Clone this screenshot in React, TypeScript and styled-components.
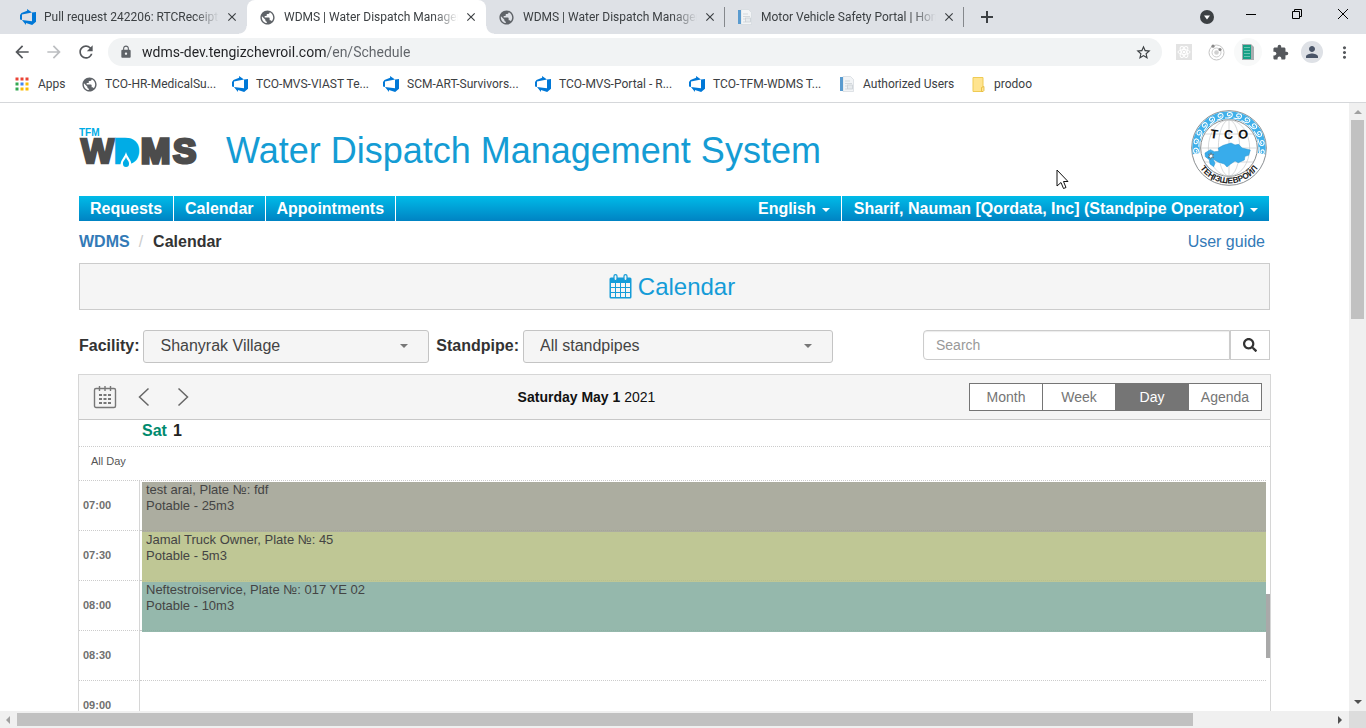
import React from "react";
import styled, { createGlobalStyle, css } from "styled-components";
import {
  MdArrowBack,
  MdArrowForward,
  MdClose,
  MdExtension,
  MdLock,
  MdMoreVert,
  MdPerson,
  MdPublic,
  MdRefresh,
  MdStarBorder,
} from "react-icons/md";
import { FaSearch } from "react-icons/fa";

const uiFont = 'Roboto, "Open Sans", sans-serif';
const pageFont = '"Liberation Sans", Arial, sans-serif';

const GlobalStyle = createGlobalStyle`
  *, *::before, *::after { box-sizing: border-box; }
  body { margin: 0; background: #fff; font-family: ${pageFont}; }
  button, input, select { font-family: inherit; margin: 0; }
  svg { display: block; flex: none; }
`;

/* ---------- browser frame ---------- */

const Browser = styled.div`
  display: flex;
  flex-direction: column;
  height: 100vh;
  overflow: hidden;
`;

const Chrome = styled.header`
  flex: none;
  font-family: ${uiFont};
  font-size: 12px;
  color: #3c4043;
  border-bottom: 1px solid #d5d7da;
`;

const TabStrip = styled.div`
  display: flex;
  height: 34px;
  padding-left: 8px;
  background: #dee1e6;
`;

const Tab = styled.div<{ $active?: boolean; $divider?: boolean }>`
  position: relative;
  display: flex;
  align-items: center;
  width: 239px;
  padding: 0 10px 0 12px;
  ${(p) =>
    p.$divider &&
    css`
      background: linear-gradient(#85888c, #85888c) right center / 1px 20px no-repeat;
    `}
  ${(p) =>
    p.$active &&
    css`
      background: #fff;
      border-radius: 8px 8px 0 0;

      &::before,
      &::after {
        content: "";
        position: absolute;
        bottom: 0;
        width: 8px;
        height: 8px;
      }

      &::before {
        right: 100%;
        background: radial-gradient(circle at 0 0, transparent 7px, #fff 8px);
      }

      &::after {
        left: 100%;
        background: radial-gradient(circle at 100% 0, transparent 7px, #fff 8px);
      }
    `}
`;

const TabLabel = styled.span`
  flex: 1;
  min-width: 0;
  margin: 0 8px;
  overflow: hidden;
  white-space: nowrap;
  line-height: 18px;
  mask-image: linear-gradient(90deg, #000 86%, transparent);
`;

const BareButton = styled.button`
  display: flex;
  align-items: center;
  justify-content: center;
  padding: 0;
  border: 0;
  background: none;
  color: #3c4043;
`;

const TabClose = styled(BareButton)`
  width: 10px;
  overflow: visible;
`;

const NewTab = styled(BareButton)`
  width: 46px;
`;

const WindowControls = styled.div`
  display: flex;
  margin-left: auto;
  height: 28px;
  color: #000;
`;

const WindowButton = styled(BareButton)`
  width: 46px;
  color: #000;
`;

const SearchTabs = styled(BareButton)`
  width: 42px;
  height: 34px;
`;

const Toolbar = styled.div`
  display: flex;
  align-items: center;
  height: 36px;
  padding: 0 6px;
`;

const ToolButton = styled(BareButton)<{ $faded?: boolean }>`
  width: 32px;
  height: 28px;
  color: ${(p) => (p.$faded ? "#bcbec1" : "#55585c")};
`;

const Omnibox = styled.div`
  display: flex;
  align-items: center;
  flex: 1;
  height: 28px;
  margin: 0 6px;
  padding: 0 10px 0 11px;
  border-radius: 14px;
  background: #f1f3f4;
  color: #5f6368;
`;

const Url = styled.input`
  flex: 1;
  min-width: 0;
  margin-left: 9px;
  padding: 0;
  border: 0;
  outline: 0;
  font-size: 14px;
  line-height: 20px;
  color: #202124;
  -webkit-text-fill-color: transparent;
  background: linear-gradient(90deg, #202124 185px, #5f6368 185px);
  -webkit-background-clip: text;
  background-clip: text;
`;

const Avatar = styled.span`
  display: flex;
  align-items: center;
  justify-content: center;
  width: 22px;
  height: 22px;
  border-radius: 50%;
  background: #dee1e6;
  color: #4a5568;
`;

const Bookmarks = styled.nav`
  display: flex;
  align-items: center;
  height: 32px;
  padding: 0 0 4px 14px;
`;

const Bookmark = styled.a<{ $width: number }>`
  display: flex;
  align-items: center;
  gap: 8px;
  flex: none;
  width: ${(p) => p.$width}px;
  color: #3c4043;
  white-space: nowrap;
  text-decoration: none;
`;

const IconSlot = styled.span`
  display: flex;
  justify-content: center;
  width: 16px;
`;

/* ---------- viewport and scrollbars ---------- */

const Viewport = styled.div`
  display: grid;
  grid-template: minmax(0, 1fr) 17px / minmax(0, 1fr) 17px;
  flex: 1;
  min-height: 0;
`;

const VerticalBar = styled.div`
  display: flex;
  flex-direction: column;
  align-items: center;
  justify-content: space-between;
  padding: 5px 0;
  background: #f0f0f0;
`;

const HorizontalBar = styled(VerticalBar)`
  flex-direction: row;
  padding: 0 5px 0 4px;
`;

const VerticalThumb = styled.div`
  width: 13px;
  height: 199px;
  margin: 4px 0 auto;
  background: #c1c1c1;
`;

const HorizontalThumb = styled.div`
  width: calc(88% - 3px);
  height: 13px;
  margin: 0 auto 0 5px;
  background: #c1c1c1;
`;

const BarCorner = styled.div`
  background: #dcdcdc;
`;

/* ---------- page ---------- */

const Page = styled.main`
  overflow: hidden;
  padding: 0 79px;
  background: #fff;
  color: #333;
  font-size: 16px;
`;

const Masthead = styled.div`
  display: flex;
  align-items: center;
  padding: 6px 3px 9px 0;
`;

const AppTitle = styled.div`
  flex: 1;
  padding: 6px 0 0 28px;
  font-size: 36px;
  line-height: 40px;
  color: #149cd4;
`;

const NavBar = styled.nav`
  display: flex;
  height: 25px;
  margin-right: 1px;
  background: linear-gradient(#00bbe8, #0083c3);
`;

const NavLink = styled.a`
  display: flex;
  align-items: center;
  padding: 0 11px;
  border-right: 1px solid #fff;
  font-weight: bold;
  line-height: 25px;
  color: #fff;
  text-decoration: none;
`;

const NavMenu = styled.button<{ $first?: boolean }>`
  display: flex;
  align-items: center;
  gap: 6px;
  padding: 0 11px 0 12px;
  border: 0;
  background: none;
  font-size: 16px;
  font-weight: bold;
  line-height: 25px;
  color: #fff;
  ${(p) =>
    p.$first
      ? css`
          margin-left: auto;
        `
      : css`
          border-left: 1px solid #fff;
        `}
`;

const Caret = styled.span`
  width: 0;
  height: 0;
  margin-top: 3px;
  border: 4px solid transparent;
  border-top-color: currentColor;
  border-bottom: 0;
`;

const CrumbRow = styled.div`
  display: flex;
  align-items: center;
  justify-content: space-between;
  height: 42px;
  padding-right: 5px;
`;

const Crumbs = styled.div`
  display: flex;
  gap: 9px;
  font-weight: bold;
`;

const CrumbSlash = styled.span`
  padding-right: 1px;
  font-weight: normal;
  color: #ccc;
`;

const TextLink = styled.a`
  color: #337ab7;
  text-decoration: none;
`;

const Banner = styled.h1`
  display: flex;
  align-items: center;
  justify-content: center;
  gap: 6px;
  height: 47px;
  margin: 0;
  padding-right: 5px;
  border: 1px solid #ccc;
  background: #f5f5f5;
  font-size: 24px;
  font-weight: normal;
  color: #149cd8;
`;

const Filters = styled.div`
  display: flex;
  align-items: flex-start;
  height: 33px;
  margin: 20px 0 11px;
`;

const FilterLabel = styled.label`
  margin-right: 4px;
  font-weight: bold;
  line-height: 31px;
  white-space: nowrap;
`;

const SelectBox = styled.div<{ $width: string }>`
  display: flex;
  align-items: center;
  width: ${(p) => p.$width};
  height: 33px;
  margin-right: 7px;
  padding: 0 20px 2px 0;
  border: 1px solid #c4c4c4;
  border-radius: 3px;
  background: #f5f5f5;
  color: #777;

  select {
    flex: 1;
    min-width: 0;
    height: 29px;
    padding: 0 0 0 16px;
    border: 0;
    outline: 0;
    appearance: none;
    background: none;
    font-size: 16px;
    color: #444;
  }

  ${Caret} {
    margin-top: 0;
  }
`;

const SearchForm = styled.form`
  display: flex;
  width: 347px;
  height: 30px;
  margin-left: auto;
`;

const SearchInput = styled.input`
  flex: 1;
  min-width: 0;
  padding: 0 12px;
  border: 1px solid #ccc;
  border-radius: 4px 0 0 4px;
  outline: 0;
  font-size: 14px;
  box-shadow: inset 0 1px 1px rgba(0, 0, 0, 0.08);

  &::placeholder {
    color: #999;
  }
`;

const SearchButton = styled.button`
  display: flex;
  align-items: center;
  justify-content: center;
  width: 40px;
  padding: 0;
  border: 1px solid #ccc;
  background: #fff;
  color: #333;
`;

/* ---------- schedule ---------- */

const Schedule = styled.section`
  position: relative;
  margin: 0 -1px;
  border: 1px solid #d6d6d6;
`;

const ScheduleBar = styled.div`
  display: flex;
  align-items: center;
  height: 45px;
  padding: 0 8px 0 6px;
  border-bottom: 1px solid #c8c8c8;
  background: #f5f5f5;
`;

const BarButton = styled(BareButton)`
  width: 39px;
  height: 44px;
  color: #777;
`;

const DateTitle = styled.div`
  flex: 1;
  padding-left: 2px;
  text-align: center;
  font-size: 14px;
  color: #111;
`;

const ViewButton = styled.button<{ $active?: boolean }>`
  width: 74px;
  height: 28px;
  padding: 0;
  border: 1px solid #757575;
  background: ${(p) => (p.$active ? "#757575" : "#fff")};
  color: ${(p) => (p.$active ? "#fff" : "#757575")};
  font-size: 14px;

  & + & {
    margin-left: -1px;
  }
`;

const dotted = css`
  border-bottom: 1px dotted #ccc;
`;

const DayHeader = styled.div`
  display: flex;
  gap: 6px;
  height: 27px;
  padding-left: 63px;
  ${dotted}
  font-weight: bold;
  line-height: 21px;
  color: #222;

  span {
    color: #008a6e;
  }
`;

const AllDay = styled.div`
  height: 34px;
  margin-right: 4px;
  padding-left: 12px;
  ${dotted}
  font-size: 11px;
  line-height: 29px;
  color: #555;
`;

const SlotRow = styled.div`
  display: grid;
  grid-template: 50px / 61px minmax(0, 1fr);
  margin-right: 4px;
`;

const SlotTime = styled.div`
  padding-left: 4px;
  border-right: 1px solid #d6d6d6;
  ${dotted}
  font-size: 11px;
  font-weight: bold;
  line-height: 49px;
  color: #707070;
`;

const SlotCell = styled.div`
  ${dotted}
`;

const Appointment = styled.div<{ $color: string }>`
  height: 50px;
  margin: 1px 0 0 2px;
  padding-left: 4px;
  background: ${(p) => p.$color};
  font-size: 13px;
  line-height: 16px;
  color: #444;
`;

const InnerThumb = styled.div`
  position: absolute;
  top: 219px;
  right: 0;
  width: 4px;
  height: 64px;
  background: #a9a9a9;
`;

const Pointer = styled.svg`
  position: absolute;
  top: 169px;
  left: 1056px;
  pointer-events: none;
`;

/* ---------- drawings ---------- */

const AzureIcon = () => (
  <svg width="16" height="16" viewBox="0 0 24 24" fill="#0078d7">
    <path d="M0 8.877L2.247 5.91l8.405-3.416V.022l7.37 5.393L2.966 8.338v8.225L0 15.707zm24-4.45v14.651l-5.753 4.9-9.303-3.057v3.056l-5.978-7.416 15.057 1.798V5.415z" />
  </svg>
);

const GlobeIcon = () => <MdPublic size={17} color="#5f6368" />;

const PortalIcon = () => (
  <svg width="16" height="16" viewBox="0 0 16 16">
    <path d="M4 .5h7.500l3 3V15.500H4z" fill="#f2f4f6" stroke="#d3d8dc" strokeWidth=".7" />
    <rect x="1" y="1" width="3" height="14" fill="#5a9bcf" />
    <path d="M6 5h5M6 7.500h7M6 10h2M6 13h2" stroke="#d3d8dc" />
    <rect x="8.500" y="9" width="5" height="4" fill="#e6eaed" stroke="#c5cbd0" strokeWidth=".7" />
  </svg>
);

const AppsIcon = () => {
  const colors = ["#ea4335", "#ea4335", "#ea4335", "#34a853", "#4285f4", "#fbbc04", "#34a853", "#fbbc04", "#fbbc04"];
  return (
    <svg width="14" height="14" viewBox="0 0 14 14">
      {colors.map((c, i) => (
        <rect key={i} x={(i % 3) * 5 + 0.5} y={Math.floor(i / 3) * 5 + 0.5} width="3" height="3" fill={c} />
      ))}
    </svg>
  );
};

const FolderIcon = () => (
  <svg width="13" height="15" viewBox="0 0 13 15">
    <path d="M1 .5h10v14H1z" fill="#ffe48f" stroke="#efcb54" />
    <path d="M9.500 10.500l2.500-1v4l-1 1h-1.500z" fill="#ffe48f" stroke="#e3b93a" strokeWidth=".8" />
  </svg>
);

const ReactExtIcon = () => (
  <svg width="16" height="16" viewBox="0 0 16 16">
    <rect width="16" height="16" fill="#e3e3e3" />
    <g fill="none" stroke="#fff">
      <ellipse cx="8" cy="8" rx="6" ry="2.500" />
      <ellipse cx="8" cy="8" rx="6" ry="2.500" transform="rotate(60 8 8)" />
      <ellipse cx="8" cy="8" rx="6" ry="2.500" transform="rotate(120 8 8)" />
    </g>
    <circle cx="8" cy="8" r="1.300" fill="#fff" />
  </svg>
);

const OrbitExtIcon = () => (
  <svg width="17" height="17" viewBox="0 0 17 17">
    <circle cx="8.500" cy="8.500" r="7.500" fill="#fff" stroke="#c4c4c4" />
    <circle cx="8.500" cy="8.500" r="4.500" fill="none" stroke="#cdcdcd" />
    <circle cx="8.500" cy="8.500" r="2.300" fill="#d0d0d0" />
    <circle cx="5" cy="2.200" r="1.600" fill="#8a8a8a" />
    <circle cx="12" cy="5.500" r="1.600" fill="#8a8a8a" />
  </svg>
);

const SheetExtIcon = () => (
  <svg width="28" height="28" viewBox="0 0 28 28">
    <circle cx="14" cy="14" r="14" fill="#f8f9f9" />
    <path d="M8 6h9l3 3v13H8z" fill="#a9adb0" />
    <path d="M9 7h8v14H9z" fill="#16a085" />
    <path d="M10.500 9.500h5M10.500 12.500h5M10.500 15.500h5M10.500 18.500h5" stroke="#bfe9df" strokeDasharray="1 1" />
  </svg>
);

const BannerCalendar = () => (
  <svg width="23" height="25" viewBox="0 0 23 25">
    <path d="M2 3.500h19a1.500 1.500 0 0 1 1.500 1.500v18a1.500 1.500 0 0 1-1.500 1.500H2A1.500 1.500 0 0 1 .5 23V5A1.500 1.500 0 0 1 2 3.500z" fill="#149cd8" />
    <g fill="#f5f5f5">
      {[9, 14, 19].map((y) =>
        [2, 7, 12, 17].map((x) => <rect key={`${x}-${y}`} x={x} y={y} width="4" height="4" />),
      )}
    </g>
    <rect x="5" y=".6" width="3" height="6" rx="1.500" fill="#f5f5f5" stroke="#149cd8" strokeWidth="1.200" />
    <rect x="15" y=".6" width="3" height="6" rx="1.500" fill="#f5f5f5" stroke="#149cd8" strokeWidth="1.200" />
  </svg>
);

const ToolbarCalendar = () => (
  <svg width="24" height="24" viewBox="0 0 24 24" fill="none" stroke="currentColor">
    <rect x="1.500" y="3.500" width="21" height="19" rx="1.500" strokeWidth="1.400" />
    <path d="M6.500 1v5M12 1v5M17.500 1v5" strokeWidth="1.400" />
    <path d="M6 10h12M6 14h12M6 18h12" strokeWidth="2" strokeDasharray="3 1.500" />
  </svg>
);

const Chevron = ({ flip }: { flip?: boolean }) => (
  <svg width="12" height="20" viewBox="0 0 12 20" fill="none" stroke="#666" strokeWidth="1.500">
    <path d={flip ? "M1.500 1.500l9 8.500-9 8.500" : "M10.500 1.500L1.500 10l9 8.500"} />
  </svg>
);

const WdmsLogo = () => (
  <svg width="119" height="40" viewBox="0 0 119 40" fontFamily={pageFont} fontWeight="bold">
    <text x="0" y="8" fontSize="10" fill="#00ace6">
      TFM
    </text>
    <g fontSize="35" strokeWidth="2.500">
      <text x="2" y="35" fill="#4c4c4c" stroke="#4c4c4c">
        W
      </text>
      <text x="35" y="35" fill="#00ace6" stroke="#00ace6">
        D
      </text>
      <text x="62" y="35" fill="#4c4c4c" stroke="#4c4c4c" strokeWidth="3.500">
        M
      </text>
      <text x="94" y="35" fill="#4c4c4c" stroke="#4c4c4c" strokeWidth="3">
        S
      </text>
    </g>
    <path d="M39 13h9q8 1 8 10t-7 10H39z" fill="#00ace6" />
    <path d="M47 24c1 5 6 8 5.500 14h-11c-.5-6 4.500-9 5.500-14z" fill="#fff" />
    <path d="M47 29c.7 3 3.500 4.200 3 7a3 3 0 0 1-6 0c-.5-2.800 2.300-4 3-7z" fill="#00ace6" />
  </svg>
);

const TcoSeal = () => {
  const scrolls = Array.from({ length: 13 }, (_, i) => -96 + i * 16);
  return (
    <svg width="76" height="78" viewBox="20 15 228 234" fontFamily={pageFont} fontWeight="bold">
      <circle cx="134" cy="132" r="112" fill="#fff" stroke="#8b8f92" strokeWidth="3" />
      <path d="M36.400 149.200A99 99 0 1 1 231.600 149.200" fill="none" stroke="#3fb0ea" strokeWidth="22" />
      {scrolls.map((a) => (
        <g key={a} transform={`rotate(${a} 134 132)`} fill="none" stroke="#fff" strokeWidth="3.200">
          <path d="M122 42c13 0 22-2 22-10s-15-9-15-1c0 6 8 6 9 1" />
        </g>
      ))}
      <circle cx="134" cy="132" r="85" fill="#fff" stroke="#6f7476" strokeWidth="2.500" />
      <g fill="none" stroke="#c4c7c9" strokeWidth="2">
        <path d="M134 48v168M50 132h168M62 90h144M62 174h144" />
        <ellipse cx="134" cy="132" rx="32" ry="84" />
        <ellipse cx="134" cy="132" rx="62" ry="84" />
      </g>
      <path
        d="M62 147l16-10 12 6 14-1-2-10 15-8 23-7 12 6 11-2 10 11 25 6-5 16-11 3-2 11-18 8-10-5-13 9-11 9-8-9-19-6-15-9 6 13-4 10-11-8-2-13-12-9z"
        fill="#38aceb"
        stroke="#2492ce"
        strokeWidth="1.500"
      />
      <path d="M80 146l2 6 6-1-4 5 4 5-6-1-3 6-2-6-6 0 5-4-3-6 6 2z" fill="#fff" stroke="#444" strokeWidth="1.500" />
      <g fontSize="38" fill="#111">
        <text x="78" y="103" transform="rotate(8 90 90)">
          T
        </text>
        <text x="119" y="104">
          C
        </text>
        <text x="162" y="104" transform="rotate(4 176 90)">
          O
        </text>
      </g>
      <path id="seal-arc" d="M28 132A106 106 0 0 0 240 132" fill="none" />
      <text fontSize="25" fill="#222" textAnchor="middle">
        <textPath href="#seal-arc" startOffset="50%">
          ТЕҢІЗШЕВРОЙЛ
        </textPath>
      </text>
    </svg>
  );
};

const Triangle = ({ points, fill = "#505050" }: { points: string; fill?: string }) => (
  <svg width="8" height="8" viewBox="0 0 8 8">
    <polygon points={points} fill={fill} />
  </svg>
);

/* ---------- data ---------- */

const tabs = [
  { title: "Pull request 242206: RTCReceipt V", icon: <AzureIcon /> },
  { title: "WDMS | Water Dispatch Managem", icon: <GlobeIcon />, active: true },
  { title: "WDMS | Water Dispatch Managem", icon: <GlobeIcon />, divider: true },
  { title: "Motor Vehicle Safety Portal | Home", icon: <PortalIcon />, divider: true },
];

const bookmarks = [
  { title: "Apps", icon: <AppsIcon />, width: 67 },
  { title: "TCO-HR-MedicalSu...", icon: <GlobeIcon />, width: 151 },
  { title: "TCO-MVS-VIAST Te...", icon: <AzureIcon />, width: 151 },
  { title: "SCM-ART-Survivors...", icon: <AzureIcon />, width: 152 },
  { title: "TCO-MVS-Portal - R...", icon: <AzureIcon />, width: 154 },
  { title: "TCO-TFM-WDMS T...", icon: <AzureIcon />, width: 150 },
  { title: "Authorized Users", icon: <PortalIcon />, width: 131 },
  { title: "prodoo", icon: <FolderIcon />, width: 80 },
];

const slots = [
  { time: "07:00", who: "test arai, Plate №: fdf", load: "Potable - 25m3", color: "rgba(157, 159, 143, 0.85)" },
  { time: "07:30", who: "Jamal Truck Owner, Plate №: 45", load: "Potable - 5m3", color: "rgba(180, 189, 131, 0.85)" },
  { time: "08:00", who: "Neftestroiservice, Plate №: 017 YE 02", load: "Potable - 10m3", color: "rgba(130, 171, 157, 0.85)" },
  { time: "08:30" },
  { time: "09:00" },
];

const views = ["Month", "Week", "Day", "Agenda"];

export default function App() {
  return (
    <Browser>
      <GlobalStyle />
      <Chrome>
        <TabStrip>
          {tabs.map((t, i) => (
            <Tab key={i} $active={t.active} $divider={t.divider}>
              {t.icon}
              <TabLabel>{t.title}</TabLabel>
              <TabClose aria-label="Close tab">
                <MdClose size={14} />
              </TabClose>
            </Tab>
          ))}
          <NewTab aria-label="New tab">
            <svg width="12" height="12" viewBox="0 0 12 12" stroke="#3c4043" strokeWidth="2">
              <path d="M6 0v12M0 6h12" />
            </svg>
          </NewTab>
          <WindowControls>
            <SearchTabs aria-label="Search tabs">
              <svg width="14" height="14" viewBox="0 0 14 14">
                <circle cx="7" cy="7" r="7" fill="#3c4043" />
                <path d="M4 5.500h6L7 9.500z" fill="#fff" />
              </svg>
            </SearchTabs>
            <WindowButton aria-label="Minimize">
              <svg width="10" height="10" viewBox="0 0 10 10" stroke="#000">
                <path d="M0 5.500h10" />
              </svg>
            </WindowButton>
            <WindowButton aria-label="Restore">
              <svg width="10" height="10" viewBox="0 0 10 10" fill="none" stroke="#000">
                <path d="M.5 2.500h7v7h-7zM2.500 2.500v-2h7v7h-2" />
              </svg>
            </WindowButton>
            <WindowButton aria-label="Close window">
              <svg width="10" height="10" viewBox="0 0 10 10" stroke="#000">
                <path d="M0 0l10 10M10 0L0 10" />
              </svg>
            </WindowButton>
          </WindowControls>
        </TabStrip>
        <Toolbar>
          <ToolButton aria-label="Back">
            <MdArrowBack size={20} />
          </ToolButton>
          <ToolButton aria-label="Forward" $faded>
            <MdArrowForward size={20} />
          </ToolButton>
          <ToolButton aria-label="Reload">
            <MdRefresh size={20} />
          </ToolButton>
          <Omnibox>
            <MdLock size={14} />
            <Url aria-label="Address" defaultValue="wdms-dev.tengizchevroil.com/en/Schedule" />
            <BareButton aria-label="Bookmark this page">
              <MdStarBorder size={17} />
            </BareButton>
          </Omnibox>
          <ToolButton aria-label="React tools">
            <ReactExtIcon />
          </ToolButton>
          <ToolButton aria-label="Orbit">
            <OrbitExtIcon />
          </ToolButton>
          <ToolButton aria-label="Sheets">
            <SheetExtIcon />
          </ToolButton>
          <ToolButton aria-label="Extensions">
            <MdExtension size={17} />
          </ToolButton>
          <ToolButton aria-label="Profile">
            <Avatar>
              <MdPerson size={18} />
            </Avatar>
          </ToolButton>
          <ToolButton aria-label="Menu">
            <MdMoreVert size={19} />
          </ToolButton>
        </Toolbar>
        <Bookmarks>
          {bookmarks.map((b) => (
            <Bookmark key={b.title} href="#" $width={b.width}>
              <IconSlot>{b.icon}</IconSlot>
              {b.title}
            </Bookmark>
          ))}
        </Bookmarks>
      </Chrome>

      <Viewport>
        <Page>
          <Masthead>
            <WdmsLogo />
            <AppTitle>Water Dispatch Management System</AppTitle>
            <TcoSeal />
          </Masthead>

          <NavBar>
            <NavLink href="#">Requests</NavLink>
            <NavLink href="#">Calendar</NavLink>
            <NavLink href="#">Appointments</NavLink>
            <NavMenu $first>
              English <Caret />
            </NavMenu>
            <NavMenu>
              Sharif, Nauman [Qordata, Inc] (Standpipe Operator) <Caret />
            </NavMenu>
          </NavBar>

          <CrumbRow>
            <Crumbs>
              <TextLink href="#">WDMS</TextLink>
              <CrumbSlash>/</CrumbSlash>
              <span>Calendar</span>
            </Crumbs>
            <TextLink href="#">User guide</TextLink>
          </CrumbRow>

          <Banner>
            <BannerCalendar />
            Calendar
          </Banner>

          <Filters>
            <FilterLabel htmlFor="facility">Facility:</FilterLabel>
            <SelectBox $width="24%">
              <select id="facility">
                <option>Shanyrak Village</option>
              </select>
              <Caret />
            </SelectBox>
            <FilterLabel htmlFor="standpipe">Standpipe:</FilterLabel>
            <SelectBox $width="26%">
              <select id="standpipe">
                <option>All standpipes</option>
              </select>
              <Caret />
            </SelectBox>
            <SearchForm>
              <SearchInput aria-label="Search" placeholder="Search" />
              <SearchButton type="button" aria-label="Run search">
                <FaSearch size={14} />
              </SearchButton>
            </SearchForm>
          </Filters>

          <Schedule>
            <ScheduleBar>
              <BarButton aria-label="Pick a date">
                <ToolbarCalendar />
              </BarButton>
              <BarButton aria-label="Previous day">
                <Chevron />
              </BarButton>
              <BarButton aria-label="Next day">
                <Chevron flip />
              </BarButton>
              <DateTitle>
                <b>Saturday May 1</b> 2021
              </DateTitle>
              {views.map((v) => (
                <ViewButton key={v} $active={v === "Day"}>
                  {v}
                </ViewButton>
              ))}
            </ScheduleBar>
            <DayHeader>
              <span>Sat</span>1
            </DayHeader>
            <AllDay>All Day</AllDay>
            {slots.map((s) => (
              <SlotRow key={s.time}>
                <SlotTime>{s.time}</SlotTime>
                <SlotCell>
                  {s.color && (
                    <Appointment $color={s.color}>
                      {s.who}
                      <br />
                      {s.load}
                    </Appointment>
                  )}
                </SlotCell>
              </SlotRow>
            ))}
            <InnerThumb />
          </Schedule>
        </Page>
        <VerticalBar>
          <Triangle points="0,6 4,2 8,6" fill="#a0a0a0" />
          <VerticalThumb />
          <Triangle points="0,2 8,2 4,6" />
        </VerticalBar>
        <HorizontalBar>
          <Triangle points="6,0 2,4 6,8" fill="#a0a0a0" />
          <HorizontalThumb />
          <Triangle points="2,0 6,4 2,8" />
        </HorizontalBar>
        <BarCorner />
      </Viewport>

      <Pointer width="13" height="21" viewBox="0 0 13 21">
        <path d="M1 1v16l4-3.500 2.500 6 2.500-1-2.500-6H12z" fill="#fff" stroke="#111" />
      </Pointer>
    </Browser>
  );
}
